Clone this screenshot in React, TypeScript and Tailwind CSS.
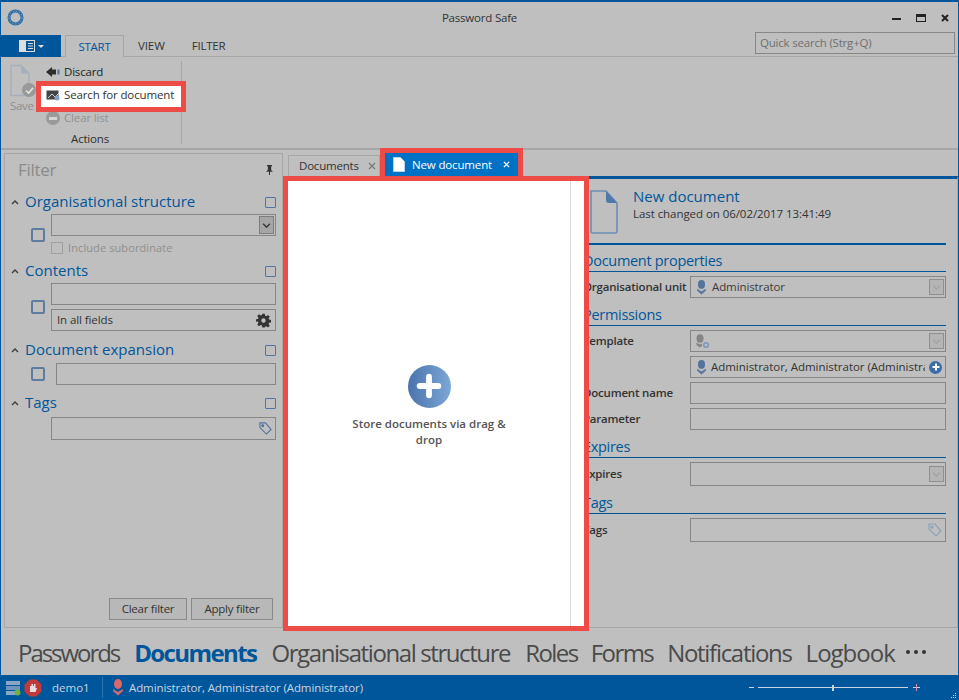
import React from "react";

const FONT = "font-['Open_Sans','Noto_Sans',sans-serif]";

function Person({ className = "" }: { className?: string }) {
  return (
    <svg viewBox="0 0 12 17" className={className} fill="currentColor">
      <ellipse cx="6" cy="5" rx="4" ry="5" />
      <path d="M1 10 L6 13 L11 10 L11 12 L6 16.5 L1 12 Z" />
    </svg>
  );
}

function PersonGear({ className = "" }: { className?: string }) {
  return (
    <svg viewBox="0 0 15 15" className={className}>
      <ellipse cx="5" cy="4.5" rx="3.5" ry="4.2" fill="#858585" />
      <path d="M1.5 8.5 L5 10.5 L7 9.5 V12 L5 13.5 L1.5 11 Z" fill="#858585" />
      <circle cx="11" cy="11" r="2.3" fill="none" stroke="#7d98ba" strokeWidth="1.6" />
    </svg>
  );
}

function Chevron({ className = "" }: { className?: string }) {
  return (
    <svg viewBox="0 0 10 6" className={className} fill="none" stroke="currentColor" strokeWidth="1.6">
      <path d="M1 1 L5 5 L9 1" />
    </svg>
  );
}

function TagIcon({ className = "" }: { className?: string }) {
  return (
    <svg viewBox="0 0 14 14" className={className} fill="none" stroke="currentColor" strokeWidth="1.2">
      <path d="M1 1 H7 L13 8 L8 13 L1 6 Z" />
      <circle cx="4" cy="4" r="1" fill="currentColor" />
    </svg>
  );
}

function DocIcon({ className = "" }: { className?: string }) {
  return (
    <svg viewBox="0 0 28 44" className={className}>
      <path d="M1 1 H16 L27 13 V41 Q27 43 25 43 H3 Q1 43 1 41 Z" fill="none" stroke="#6b8db5" strokeWidth="1.6" />
      <path d="M16 1 L27 13 H19 Q16 13 16 10 Z" fill="#4f78a8" />
    </svg>
  );
}

function Box({ h = "h-[22px]", className = "", children }: { h?: string; className?: string; children?: React.ReactNode }) {
  return <div className={`flex items-center border border-[#868686] ${h} ${className}`}>{children}</div>;
}

function DropBtn() {
  return (
    <div className="mr-[1px] ml-auto flex h-[16px] w-[15px] items-center justify-center border border-[#8f8f8f] bg-[#b5b5b5] text-[#a3a3a3]">
      <Chevron className="h-[5px] w-[9px]" />
    </div>
  );
}

function SmallCheck() {
  return <div className="h-[11px] w-[11px] rounded-[1px] border border-[#4f75a6]" />;
}

function BigCheck() {
  return <div className="h-[14px] w-[14px] rounded-[2px] border-2 border-[#5f7ba0]" />;
}

function SectionHead({ title, className = "" }: { title: string; className?: string }) {
  return (
    <div className={`flex h-[24px] items-center ${className}`}>
      <svg viewBox="0 0 8 5" className="ml-[4px] h-[5px] w-[8px] text-[#3c3c3c]" fill="none" stroke="currentColor" strokeWidth="1.4">
        <path d="M1 4 L4 1 L7 4" />
      </svg>
      <span className="ml-[6px] mb-[2px] text-[15px] tracking-[0px] text-[#00569a]">{title}</span>
      <div className="ml-auto">
        <SmallCheck />
      </div>
    </div>
  );
}

function DetailHeading({ title, className = "" }: { title: string; className?: string }) {
  return (
    <div className={`flex items-end border-b border-[#00569a] text-[14.5px] leading-[20px] tracking-[-0.3px] text-[#00569a] ${className}`}>
      {title}
    </div>
  );
}

function DetailRow({ label, children }: { label?: string; children: React.ReactNode }) {
  return (
    <div className="flex items-center">
      <div className="w-[107px] shrink-0 text-[11.5px] font-semibold tracking-[-0.2px] text-[#333]">{label}</div>
      <div className="min-w-0 flex-1">{children}</div>
    </div>
  );
}

function Nav({ children, className = "" }: { children: React.ReactNode; className?: string }) {
  return <span className={`text-[24px] text-[#4a4a4a] ${className}`}>{children}</span>;
}

export default function App() {
  return (
    <div className={`${FONT} flex h-[700px] w-[959px] flex-col overflow-hidden border-x border-t-2 border-[#00569a] bg-[#bfbfbf] text-[12px] text-[#333]`}>
      {/* title bar */}
      <div className="relative flex h-[31px] shrink-0 items-center">
        <svg viewBox="0 0 17 17" className="ml-[6px] h-[17px] w-[17px]" fill="none">
          <circle cx="8.5" cy="8.5" r="6.5" stroke="#2f6ea5" strokeWidth="3" />
          <circle cx="8.5" cy="8.5" r="6.5" stroke="#8fb0cf" strokeWidth="0.7" strokeDasharray="1.5 1.5" />
        </svg>
        <div className="absolute inset-x-0 top-[7px] text-center text-[11.5px] tracking-[-0.2px] text-[#333]">Password Safe</div>
        <div className="ml-auto mr-[9px] flex items-center gap-[15px]">
          <div className="mt-[3px] h-[2px] w-[9px] bg-[#222]" />
          <div className="h-[8px] w-[10px] border border-t-[3px] border-[#222]" />
          <svg viewBox="0 0 8 8" className="h-[8px] w-[8px]" stroke="#222" strokeWidth="2">
            <path d="M1 1 L7 7 M7 1 L1 7" />
          </svg>
        </div>
      </div>

      {/* ribbon tabs */}
      <div className="relative flex h-[24px] shrink-0 items-end border-b border-[#a6a6a6]">
        <div className="mb-[-1px] flex h-[22px] w-[60px] items-center justify-center gap-[3px] bg-[#00569a]">
          <svg viewBox="0 0 16 12" className="h-[12px] w-[16px]">
            <rect x="0.5" y="0.5" width="15" height="11" fill="none" stroke="#ddd" />
            <rect x="1" y="1" width="6" height="10" fill="#ddd" />
            <path d="M9 3.5 H14 M9 6 H14 M9 8.5 H14" stroke="#ddd" />
          </svg>
          <div className="h-0 w-0 border-x-[3px] border-t-[3px] border-x-transparent border-t-[#ddd]" />
        </div>
        <div className="mb-[-1px] ml-[4px] flex h-[22px] w-[59px] items-center justify-center border border-b-0 border-[#a6a6a6] bg-[#bfbfbf] pt-[1px] text-[11.5px] tracking-[-0.3px] text-[#00569a]">
          START
        </div>
        <div className="mb-[2px] ml-[14px] text-[11.5px] tracking-[-0.1px]">VIEW</div>
        <div className="mb-[2px] ml-[27px] text-[11.5px] tracking-[-0.2px]">FILTER</div>
        <div className="mb-[2px] ml-auto mr-[3px] flex h-[22px] w-[200px] items-center border border-[#868686] pl-[4px] text-[11.5px] tracking-[-0.2px] text-[#6f6f6f]">
          Quick search (Strg+Q)
        </div>
      </div>

      {/* ribbon body */}
      <div className="flex h-[93px] shrink-0 border-b-2 border-[#a6a6a6] pt-[4px]">
        <div className="ml-[9px] flex w-[31px] flex-col items-start pt-[3px]">
          <div className="relative h-[33px] w-[26px]">
            <svg viewBox="0 0 20 32" className="h-[33px] w-[20px]">
              <path d="M1 1 H11 L19 9 V31 H1 Z" fill="none" stroke="#a5afbd" strokeWidth="1.4" />
              <path d="M11 1 L19 9 H11 Z" fill="#a5afbd" />
            </svg>
            <div className="absolute right-0 bottom-0 flex h-[14px] w-[14px] items-center justify-center rounded-full bg-[#999]">
              <svg viewBox="0 0 10 8" className="h-[7px] w-[9px]" fill="none" stroke="#ddd" strokeWidth="2">
                <path d="M1 4 L4 7 L9 1" />
              </svg>
            </div>
          </div>
          <div className="text-[11.5px] tracking-[-0.3px] text-[#8e8e8e]">Save</div>
        </div>
        <div className="flex w-[140px] flex-col">
          <div className="ml-[5px] flex h-[21px] items-center">
            <svg viewBox="0 0 14 10" className="h-[10px] w-[14px]" fill="#2e2e2e">
              <path d="M0 5 L6 0 V10 Z M6 2.5 H10 V7.5 H6 Z" />
              <rect x="11.5" y="2.5" width="2" height="5" fill="#50709a" />
            </svg>
            <span className="ml-[4px] text-[11.5px] tracking-[-0.2px] text-[#222]">Discard</span>
          </div>
          <div className="relative z-10 mt-[4px] flex h-[21px] items-center bg-white pb-[3px] pl-[5px]">
            <div className="pointer-events-none absolute inset-[-5px] border-[5px] border-[#ee4b47]" />
            <svg viewBox="0 0 14 11" className="h-[11px] w-[14px]">
              <rect x="0.5" y="0.5" width="12" height="9" fill="#444" />
              <path d="M2 8 L6 4 L9 7 L13 3" stroke="#cbd7e6" strokeWidth="1" fill="none" />
              <circle cx="11" cy="8" r="2.5" fill="#7ba1cc" />
            </svg>
            <span className="ml-[4px] whitespace-nowrap text-[11.5px] tracking-[-0.13px] text-[#333]">Search for document</span>
          </div>
          <div className="ml-[5px] flex h-[22px] items-center">
            <div className="flex h-[14px] w-[14px] items-center justify-center rounded-full bg-[#9a9a9a]">
              <div className="h-[3px] w-[8px] bg-[#d6d6d6]" />
            </div>
            <span className="ml-[4px] text-[11.5px] tracking-[-0.15px] text-[#929292]">Clear list</span>
          </div>
          <div className="ml-[-41px] mt-[1px] pr-[1px] text-center text-[11.5px] tracking-[-0.2px] text-[#2f2f2f]">Actions</div>
        </div>
        <div className="mb-[4px] w-px bg-[#a6a6a6]" />
      </div>

      {/* main */}
      <div className="flex min-h-0 flex-1">
        {/* filter */}
        <div className="ml-[3px] mt-[3px] flex h-[475px] w-[279px] shrink-0 flex-col border border-[#a6a6a6] pl-[2px] pr-[6px]">
          <div className="flex h-[34px] shrink-0 items-center pb-[2px]">
            <span className="ml-[11px] text-[17px] tracking-[-0.3px] text-[#8b8b8b]">Filter</span>
            <svg viewBox="0 0 8 12" className="ml-auto mr-[3px] h-[10px] w-[7px]" fill="#333">
              <path d="M1 0 H7 V1 L6 2 V6 L8 8 H4.6 V12 H3.4 V8 H0 L2 6 V2 L1 1 Z" />
            </svg>
          </div>
          <SectionHead title="Organisational structure" className="mt-[2px]" />
          <div className="flex">
            <div className="ml-[24px] mt-[14px]">
              <BigCheck />
            </div>
            <div className="ml-[6px] flex-1">
              <Box>
                <div className="mr-[1px] ml-auto flex h-[18px] w-[15px] items-center justify-center border border-[#7d7d7d] bg-[#a6a6a6] text-[#333]">
                  <Chevron className="h-[5px] w-[9px]" />
                </div>
              </Box>
              <div className="mt-[6px] flex h-[12px] items-center">
                <div className="h-[12px] w-[12px] border border-[#a0a0a0]" />
                <span className="ml-[5px] text-[11px] tracking-[0.1px] text-[#8f8f8f]">Include subordinate</span>
              </div>
            </div>
          </div>
          <SectionHead title="Contents" className="mt-[5px]" />
          <div className="flex">
            <div className="ml-[24px] mt-[17px]">
              <BigCheck />
            </div>
            <div className="ml-[6px] flex flex-1 flex-col gap-[4px]">
              <Box />
              <Box className="justify-between pl-[5px] pr-[4px]">
                <span className="text-[11.5px] tracking-[-0.1px] text-[#333]">In all fields</span>
                <svg viewBox="0 0 24 24" className="h-[15px] w-[15px]" fill="#333">
                  <path
                    fillRule="evenodd"
                    d="M10 1h4l.6 3.2 2 .8L19.3 3l2.8 2.8-2 2.7.8 2 3.1.5v4l-3.1.6-.8 2 1.9 2.6-2.8 2.8-2.7-1.9-2 .8L14 23h-4l-.5-3.1-2-.8-2.7 1.9-2.8-2.8 1.9-2.7-.8-2L0 14v-4l3.1-.5.8-2-1.9-2.7L4.8 2l2.7 1.9 2-.8zM12 8.5a3.5 3.5 0 1 0 0 7 3.5 3.5 0 0 0 0-7z"
                  />
                </svg>
              </Box>
            </div>
          </div>
          <SectionHead title="Document expansion" className="mt-[7px]" />
          <div className="mt-[1px] flex items-center">
            <div className="ml-[24px]">
              <BigCheck />
            </div>
            <Box className="ml-[11px] flex-1" />
          </div>
          <SectionHead title="Tags" className="mt-[6px]" />
          <div className="mt-[2px] flex">
            <Box h="h-[23px]" className="ml-[44px] flex-1 justify-end pr-[3px] text-[#54739c]">
              <TagIcon className="h-[13px] w-[13px]" />
            </Box>
          </div>
          <div className="mb-[7px] mt-auto flex justify-end gap-[4px] pr-[3px]">
            <div className="flex h-[22px] w-[78px] items-center justify-center border border-[#8a8a8a] bg-[#b8b8b8] text-[11.5px] tracking-[-0.25px]">Clear filter</div>
            <div className="flex h-[22px] w-[82px] items-center justify-center border border-[#8a8a8a] bg-[#b8b8b8] text-[11.5px] tracking-[-0.25px]">Apply filter</div>
          </div>
        </div>

        {/* documents */}
        <div className="flex min-w-0 flex-1 flex-col">
          <div className="flex h-[26px] shrink-0 items-end pl-[5px]">
            <div className="flex h-[21px] w-[92px] items-center justify-between border border-b-0 border-[#a6a6a6] pl-[10px] pr-[3px]">
              <span className="text-[11.5px] tracking-[-0.2px] text-[#333]">Documents</span>
              <svg viewBox="0 0 8 8" className="h-[8px] w-[8px]" stroke="#777" strokeWidth="1.2">
                <path d="M1 1 L7 7 M7 1 L1 7" />
              </svg>
            </div>
            <div className="relative z-20 flex h-[28px] w-[143px] shrink-0 items-center border-[5px] border-b-0 border-[#ee4b47] bg-[#0072c6] pl-[8px] pr-[8px]">
              <svg viewBox="0 0 12 15" className="h-[15px] w-[12px]">
                <path d="M0.5 0.5 H7.5 L11.5 4.5 V14.5 H0.5 Z" fill="#fff" stroke="#bcd3ea" strokeWidth="1" />
              </svg>
              <span className="ml-[7px] text-[11.5px] tracking-[-0.15px] text-white">New document</span>
              <svg viewBox="0 0 8 8" className="ml-auto h-[7px] w-[7px]" stroke="#fff" strokeWidth="1.6">
                <path d="M1 1 L7 7 M7 1 L1 7" />
              </svg>
            </div>
          </div>
          <div className="flex min-h-0">
            <div className="relative z-10 flex h-[455px] w-[306px] shrink-0 border-[5px] border-[#ee4b47] bg-white">
              <div className="flex w-[282px] flex-col items-center justify-center pt-[5px]">
                <div className="flex h-[43px] w-[43px] items-center justify-center rounded-full bg-gradient-to-r from-[#4a74ac] to-[#7ca7d6]">
                  <svg viewBox="0 0 24 24" className="h-[28px] w-[28px]" stroke="#fff" strokeWidth="5" strokeLinecap="round">
                    <path d="M12 4 V20 M4 12 H20" />
                  </svg>
                </div>
                <div className="mt-[8px] w-[170px] text-center text-[11.5px] font-semibold leading-[16px] tracking-[0px] text-[#555]">
                  Store documents via drag &amp; drop
                </div>
              </div>
              <div className="relative w-px bg-[#d9d9d9]" />
            </div>
            <div className="ml-[-6px] flex h-[452px] min-w-0 flex-1 flex-col border-b border-r border-[#a6a6a6] border-t-[3px] border-t-[#00569a] pr-[11px]">
              <div className="flex h-[66px] shrink-0 border-b-2 border-[#00569a]">
                <DocIcon className="ml-[7px] mt-[11px] h-[44px] w-[28px]" />
                <div className="ml-[15px] mt-[7px]">
                  <div className="text-[15px] leading-[20px] tracking-[0px] text-[#00569a]">New document</div>
                  <div className="text-[11.5px] leading-[15px] tracking-[-0.06px] text-[#333]">Last changed on 06/02/2017 13:41:49</div>
                </div>
              </div>
              <DetailHeading title="Document properties" className="h-[27px]" />
              <div className="mt-[4px]">
                <DetailRow label="Organisational unit">
                  <Box className="pl-[5px] text-[#3c3c3c]">
                    <Person className="h-[15px] w-[11px] text-[#54739c]" />
                    <span className="ml-[5px] text-[11.5px] tracking-[-0.1px]">Administrator</span>
                    <DropBtn />
                  </Box>
                </DetailRow>
              </div>
              <DetailHeading title="Permissions" className="mt-[6px] h-[22px]" />
              <div className="mt-[4px] flex flex-col gap-[4px]">
                <DetailRow label="Template">
                  <Box className="pl-[4px]">
                    <PersonGear className="h-[15px] w-[15px]" />
                    <DropBtn />
                  </Box>
                </DetailRow>
                <DetailRow>
                  <Box className="pl-[5px] pr-[3px]">
                    <Person className="h-[15px] w-[11px] shrink-0 text-[#54739c]" />
                    <span className="ml-[4px] min-w-0 flex-1 overflow-hidden whitespace-nowrap text-[11.5px] tracking-[-0.03px] text-[#333]">
                      Administrator, Administrator (Administrator)
                    </span>
                    <div className="ml-[4px] flex h-[13px] w-[13px] shrink-0 items-center justify-center rounded-full bg-[#3c6ca8]">
                      <svg viewBox="0 0 8 8" className="h-[8px] w-[8px]" stroke="#fff" strokeWidth="2">
                        <path d="M4 0.5 V7.5 M0.5 4 H7.5" />
                      </svg>
                    </div>
                  </Box>
                </DetailRow>
                <DetailRow label="Document name">
                  <Box />
                </DetailRow>
                <DetailRow label="Parameter">
                  <Box />
                </DetailRow>
              </div>
              <DetailHeading title="Expires" className="mt-[6px] h-[22px]" />
              <div className="mt-[4px]">
                <DetailRow label="Expires">
                  <Box h="h-[24px]">
                    <DropBtn />
                  </Box>
                </DetailRow>
              </div>
              <DetailHeading title="Tags" className="mt-[6px] h-[22px]" />
              <div className="mt-[4px]">
                <DetailRow label="Tags">
                  <Box h="h-[24px]" className="justify-end pr-[3px] text-[#8ea2bc]">
                    <TagIcon className="h-[14px] w-[14px]" />
                  </Box>
                </DetailRow>
              </div>
            </div>
          </div>
        </div>
      </div>

      {/* nav */}
      <div className="flex h-[44px] shrink-0 items-center pb-[1px] pl-[17px]">
        <Nav className="tracking-[-2.05px]">Passwords</Nav>
        <Nav className="ml-[15px] font-bold tracking-[-1.6px] text-[#00569a]">Documents</Nav>
        <Nav className="ml-[15px] tracking-[-1.4px]">Organisational structure</Nav>
        <Nav className="ml-[15px] tracking-[-1.55px]">Roles</Nav>
        <Nav className="ml-[13px] tracking-[-1.55px]">Forms</Nav>
        <Nav className="ml-[14px] tracking-[-1.3px]">Notifications</Nav>
        <Nav className="ml-[14px] tracking-[-1px]">Logbook</Nav>
        <div className="mb-[2px] ml-[11px] flex gap-[4px]">
          <div className="h-[4px] w-[4px] rounded-full bg-[#333]" />
          <div className="h-[4px] w-[4px] rounded-full bg-[#333]" />
          <div className="h-[4px] w-[4px] rounded-full bg-[#333]" />
        </div>
      </div>

      {/* status bar */}
      <div className="relative flex h-[25px] shrink-0 items-center bg-[#00569a] text-[11.5px] text-[#c9d5e2]">
        <svg viewBox="0 0 16 16" className="ml-[4px] h-[16px] w-[16px]">
          <rect x="1" y="1" width="14" height="4" fill="#8aa6c6" />
          <rect x="1" y="6" width="14" height="4" fill="#6f93ba" />
          <rect x="1" y="11" width="12" height="4" fill="#8aa6c6" />
          <circle cx="12.5" cy="12.5" r="3" fill="#6db33f" />
        </svg>
        <svg viewBox="0 0 18 18" className="ml-[3px] h-[18px] w-[18px]">
          <path d="M5.5 0.5 H12.5 L17.5 5.5 V12.5 L12.5 17.5 H5.5 L0.5 12.5 V5.5 Z" fill="#c0393b" />
          <path d="M6 13 V7 H7.5 V5 H9 V7 H10 V5 H11.5 V9 H13 L11.5 13 Z" fill="#eadcdc" />
        </svg>
        <span className="ml-[10px] w-[50px]">demo1</span>
        <div className="h-[21px] w-px bg-[#2a74ad]" />
        <Person className="ml-[9px] h-[17px] w-[12px] text-[#d9686a]" />
        <span className="ml-[5px] tracking-[-0.1px]">Administrator, Administrator (Administrator)</span>
        <div className="ml-auto mr-[38px] flex items-center">
          <div className="h-px w-[5px] bg-[#c9d5e2]" />
          <div className="relative ml-[4px] flex h-[6px] w-[150px] items-center">
            <div className="h-px w-full bg-[#c9d5e2]" />
            <div className="absolute left-[74px] h-[6px] w-[2px] bg-[#c9d5e2]" />
          </div>
          <div className="relative ml-[5px] h-[7px] w-[7px]">
            <div className="absolute top-[3px] h-px w-[7px] bg-[#c9d5e2]" />
            <div className="absolute left-[3px] h-[7px] w-px bg-[#d98cb0]" />
          </div>
        </div>
        <svg viewBox="0 0 6 6" className="absolute bottom-[1px] right-[1px] h-[6px] w-[6px]" fill="#c9d5e2">
          <rect x="4" y="0" width="1" height="1" />
          <rect x="2" y="2" width="1" height="1" />
          <rect x="4" y="2" width="1" height="1" />
          <rect x="0" y="4" width="1" height="1" />
          <rect x="2" y="4" width="1" height="1" />
          <rect x="4" y="4" width="1" height="1" />
        </svg>
      </div>
    </div>
  );
}
